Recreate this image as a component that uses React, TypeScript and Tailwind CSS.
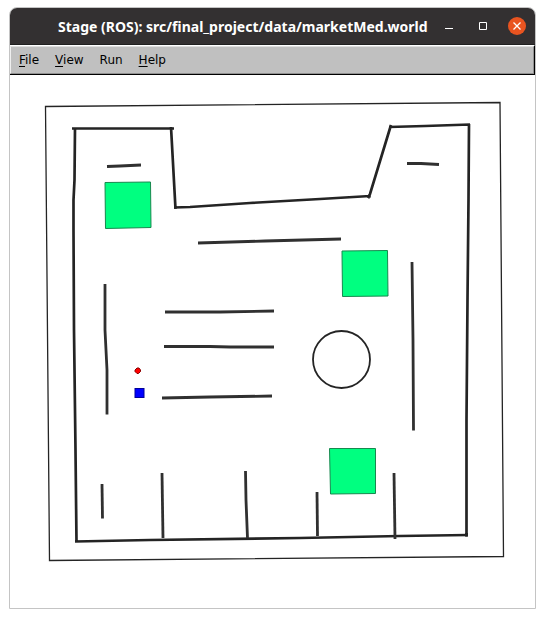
const menus = [
  { key: "F", rest: "ile", underlined: true },
  { key: "V", rest: "iew", underlined: true },
  { key: "R", rest: "un", underlined: false },
  { key: "H", rest: "elp", underlined: true },
];

const shelves = [
  "M107 166.500 L120 166 L141 165",
  "M407 163.500 L421 163.500 L439 164.500",
  "M198 243 L265 241 L341 239",
  "M105 284 L105 330 L107 370 L107 414.500",
  "M165 312 L220 312 L274 311",
  "M164 346.500 L210 346.500 L230 347 L274 347",
  "M162 398 L210 397 L272 396",
  "M412 262 L413 340 L413.500 430.500",
  "M102 484 L102.500 518.500",
  "M162 473 L163 538",
  "M245.500 471 L246 500 L247.500 538",
  "M317 492 L317.500 536",
  "M394 473 L395 539",
];

function WorldMap() {
  return (
    <svg viewBox="10 75 525 533" className="block w-full" role="img" aria-label="Simulated market world">
      <g fill="none" stroke="#242424">
        <path d="M45.500 106.500 L500 102.500 L503.500 556.500 L49.500 560.500 Z" strokeWidth="1.300" />
        <path
          d="M72 128.500 H90 L174 128.500 M171 127 L172 145 L175.500 209 M174 207.500 L190 207 L250 203 L320 199 L370 196 M368 198 L370 194 L391 125 M389 127 L425 126 L470 124.500 M469 124 L468.500 200 L467.500 300 L466.500 420 L466.500 537 M468 535 L400 536 L300 538 L150 540 L75 541.500 M76.500 542 L75.500 450 L74 330 L73.500 230 L73.500 200 L74.500 180 L75 128"
          strokeWidth="2.700"
        />
        {shelves.map((d) => (
          <path key={d} d={d} stroke="#303030" strokeWidth="2.800" />
        ))}
        <circle cx="341.500" cy="359.500" r="28.500" strokeWidth="1.800" />
        <circle cx="369" cy="196.500" r="1.500" />
      </g>
      <g fill="#00ff80" stroke="#18884f" strokeWidth="1">
        <path d="M105 182.500 L150.500 182 L151 227.500 L105.500 228.500 Z" />
        <path d="M342 251 L387.500 250.500 L388 296 L342.500 296.500 Z" />
        <path d="M329.500 448.500 L375.500 448.500 L375.500 493.500 L330.500 494 Z" />
      </g>
      <path d="M137 368 H139 L140.500 370 V371.500 L138.500 373.500 H137 L135 371.500 V370 Z" fill="#ff0000" stroke="#880000" />
      <rect x="135" y="388.500" width="9" height="9" fill="#0000ff" stroke="#000099" />
    </svg>
  );
}

export default function App() {
  return (
    <main className="bg-white px-[9px] pt-[7px] pb-[9px]">
      <section className="overflow-hidden rounded-t-lg border border-[#c4c4c4] bg-white">
        <header className="flex h-[37px] items-center border-b border-[#202020] bg-[#333031] pr-[9px] text-white">
          <h1 className="flex-1 pt-px pl-12 font-['Noto_Sans','Open_Sans',sans-serif] text-sm font-bold whitespace-nowrap">
            Stage (ROS): src/final_project/data/marketMed.world
          </h1>
          <div className="flex shrink-0 items-center gap-4">
            <button type="button" aria-label="Minimize" className="flex h-5 w-[18px] items-center justify-center">
              <svg width="18" height="18" viewBox="0 0 18 18"><path d="M5 11.500h8" stroke="white" /></svg>
            </button>
            <button type="button" aria-label="Maximize" className="flex h-5 w-[18px] items-center justify-center">
              <svg width="18" height="18" viewBox="0 0 18 18"><path d="M5.500 5.500h7v7h-7z" fill="none" stroke="white" /></svg>
            </button>
            <button type="button" aria-label="Close" className="flex size-[18px] items-center justify-center rounded-full bg-[#e95420]">
              <svg width="18" height="18" viewBox="0 0 18 18"><path d="M5.500 5.500l7 7m0-7l-7 7" stroke="white" strokeWidth="1.300" /></svg>
            </button>
          </div>
        </header>
        <nav className="h-[30px] border-t border-r border-b border-t-white border-r-black border-b-black bg-[#c0c0c0]">
          <div className="flex h-full items-center gap-4 border border-t-[#dedede] border-r-[#909090] border-b-[#909090] border-l-[#efefef] pl-2 font-['DejaVu_Sans',sans-serif] text-xs text-black">
            {menus.map((menu) => (
              <button key={menu.key} type="button" className="leading-4">
                <span className={menu.underlined ? "underline decoration-1 underline-offset-2" : ""}>{menu.key}</span>
                {menu.rest}
              </button>
            ))}
          </div>
        </nav>
        <WorldMap />
      </section>
    </main>
  );
}
